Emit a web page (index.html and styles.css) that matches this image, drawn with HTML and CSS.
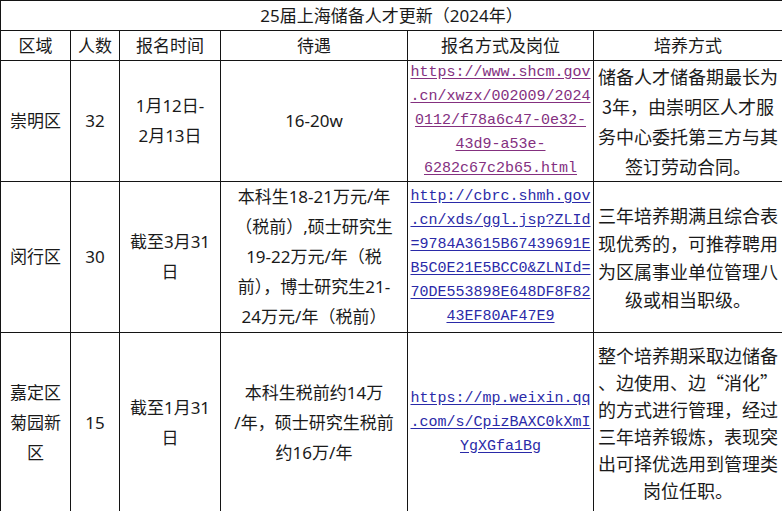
FILE: index.html
```html
<!DOCTYPE html>
<html lang="zh-CN">
<head>
<meta charset="utf-8">
<title>25届上海储备人才更新（2024年）</title>
<link rel="stylesheet" href="styles.css">
</head>
<body>
<table class="grid">
  <colgroup>
    <col class="c-area">
    <col class="c-num">
    <col class="c-time">
    <col class="c-pay">
    <col class="c-link">
    <col class="c-train">
  </colgroup>
  <tr class="r-title"><td colspan="6">25届上海储备人才更新（2024年）</td></tr>
  <tr class="r-head">
    <td>区域</td><td>人数</td><td>报名时间</td><td>待遇</td><td>报名方式及岗位</td><td>培养方式</td>
  </tr>
  <tr class="r-1">
    <td>崇明区</td>
    <td>32</td>
    <td class="multi">1月12日-<br>2月13日</td>
    <td>16-20w</td>
    <td class="link"><a class="visited" href="#">https://www.shcm.gov<br>.cn/xwzx/002009/2024<br>0112/f78a6c47-0e32-<br>43d9-a53e-<br>6282c67c2b65.html</a></td>
    <td class="train lh30">储备人才储备期最长为<br>3年，由崇明区人才服<br>务中心委托第三方与其<br>签订劳动合同。</td>
  </tr>
  <tr class="r-2">
    <td>闵行区</td>
    <td>30</td>
    <td class="multi">截至3月31<br>日</td>
    <td class="multi">本科生18-21万元/年<br>（税前）,硕士研究生<br>19-22万元/年（税<br>前），博士研究生21-<br>24万元/年（税前）</td>
    <td class="link"><a href="#">http://cbrc.shmh.gov<br>.cn/xds/ggl.jsp?ZLId<br>=9784A3615B67439691E<br>B5C0E21E5BCC0&amp;ZLNId=<br>70DE553898E648DF8F82<br>43EF80AF47E9</a></td>
    <td class="train lh28">三年培养期满且综合表<br>现优秀的，可推荐聘用<br>为区属事业单位管理八<br>级或相当职级。</td>
  </tr>
  <tr class="r-3">
    <td class="multi">嘉定区<br>菊园新<br>区</td>
    <td>15</td>
    <td class="multi">截至1月31<br>日</td>
    <td class="multi">本科生税前约14万<br>/年，硕士研究生税前<br>约16万/年</td>
    <td class="link"><a href="#">https://mp.weixin.qq<br>.com/s/CpizBAXC0kXmI<br>YgXGfa1Bg</a></td>
    <td class="train lh27">整个培养期采取边储备<br>、边使用、边“消化”<br>的方式进行管理，经过<br>三年培养锻炼，表现突<br>出可择优选用到管理类<br>岗位任职。</td>
  </tr>
</table>
</body>
</html>
```

FILE: styles.css
```css
html, body {
  margin: 0;
  padding: 0;
  background: #ffffff;
}

body {
  font-family: "Noto Sans", "Noto Sans CJK SC", sans-serif;
  color: #1a1a1a;
}

.grid {
  border-collapse: collapse;
  table-layout: fixed;
  width: 782px;
}

.c-area { width: 70px; }
.c-num { width: 49px; }
.c-time { width: 101px; }
.c-pay { width: 187px; }
.c-link { width: 186px; }
.c-train { width: 189px; }

.grid td {
  border: 1px solid #141414;
  padding: 0;
  text-align: center;
  vertical-align: middle;
  white-space: nowrap;
  font-size: 17px;
  line-height: 24px;
}

.r-title { height: 30px; }
.r-head { height: 30px; }
.r-1 { height: 120px; }
.r-2 { height: 150px; }
.r-3 { height: 180px; }

.grid td.multi {
  line-height: 30px;
}

.grid td.link {
  font-family: "Liberation Mono", "DejaVu Sans Mono", monospace;
  font-size: 15px;
  line-height: 24px;
}

.link a {
  color: #2a2aa8;
  text-decoration: underline;
  text-underline-offset: 2px;
}

.link a.visited {
  color: #84307f;
}

.grid td.train {
  font-family: "Noto Sans CJK SC", sans-serif;
  font-size: 18px;
}

.grid td.lh30 { line-height: 30px; }
.grid td.lh28 { line-height: 28px; }
.grid td.lh27 { line-height: 27px; }
```
